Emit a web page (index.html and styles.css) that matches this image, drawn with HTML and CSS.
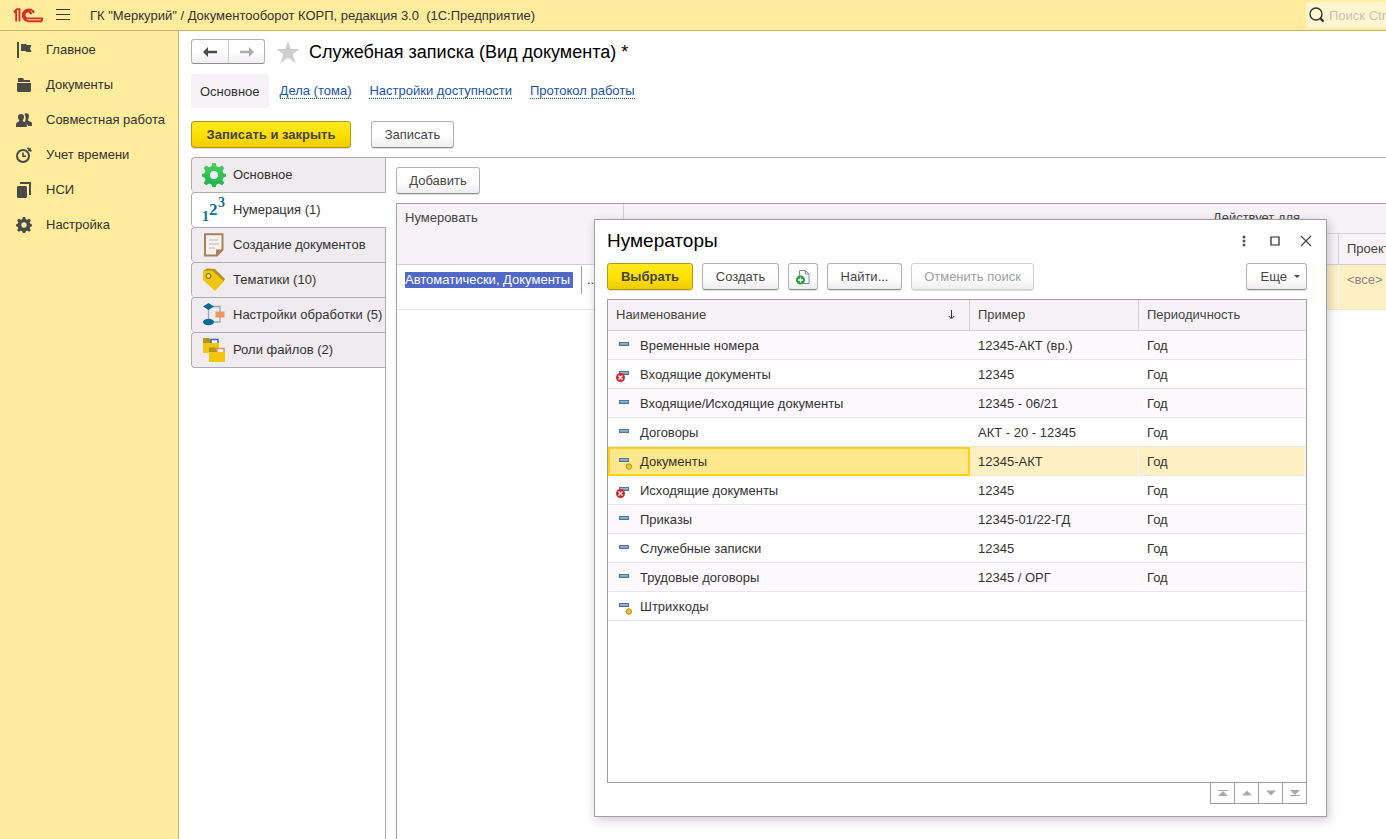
FILE: index.html
```html
<!DOCTYPE html>
<html lang="ru">
<head>
<meta charset="utf-8">
<title>Служебная записка (Вид документа)</title>
<link rel="stylesheet" href="styles.css">
</head>
<body>
<svg class="defs" aria-hidden="true">
  <defs>
    <linearGradient id="bar-fill" x1="0" y1="0" x2="0" y2="1"><stop offset="0" stop-color="#9cc7e4"/><stop offset="1" stop-color="#5f96bd"/></linearGradient>
    <linearGradient id="gear-fill" x1="0" y1="0" x2="0" y2="1"><stop offset="0" stop-color="#4bd05f"/><stop offset="1" stop-color="#22b04c"/></linearGradient>
    <symbol id="item" viewBox="0 0 16 16"><rect x="3.500" y="4.500" width="9" height="3" fill="url(#bar-fill)" stroke="#4d7594"/></symbol>
    <symbol id="item-deleted" viewBox="0 0 16 16"><rect x="3.500" y="4.500" width="9" height="3" fill="url(#bar-fill)" stroke="#4d7594"/><circle cx="4.500" cy="10.500" r="4.500" fill="#d3242c"/><path d="M2.500 8.500l4 4M6.500 8.500l-4 4" stroke="#fff" stroke-width="1.300"/></symbol>
    <symbol id="item-preset" viewBox="0 0 16 16"><rect x="3.500" y="4.500" width="9" height="3" fill="url(#bar-fill)" stroke="#4d7594"/><circle cx="12.800" cy="12.500" r="2.700" fill="#f3c32c" stroke="#b38a16"/></symbol>
    <symbol id="gear" viewBox="0 0 24 24"><path fill-rule="evenodd" d="M10.300 0h3.400l.9 3.300 2.300 1 3-1.800 2.400 2.400-1.800 3 1 2.300 2.500.9v2.600l-2.500.8-1 2.400 1.800 3-2.400 2.400-3-1.800-2.300 1-.9 2.500h-3.400l-.9-2.500-2.300-1-3 1.800-2.400-2.400 1.800-3-1-2.400L0 13.700v-2.600l2.500-.9 1-2.300-1.800-3 2.400-2.400 3 1.800 2.300-1zM12 8a4 4 0 1 0 0 8 4 4 0 0 0 0-8z"/></symbol>
  </defs>
</svg>

<header class="topbar">
  <svg class="logo" viewBox="0 0 30 15" fill="none" stroke="#df2b26" stroke-width="1.900"><path d="M1 4.200h2.200v9.300M1 4l3-2.800h2.500v12.300M21 4.800A5.900 5.900 0 1 0 15 13.200h14M18.200 6.200A3.400 3.400 0 1 0 15 10.400h14v2.600"/></svg>
  <button class="menu-btn" aria-label="Меню"><svg width="14" height="12" viewBox="0 0 14 12"><path d="M0 .5h14M0 5.500h14M0 10.500h14" stroke="#3c3c3c"/></svg></button>
  <span class="app-title">ГК "Меркурий" / Документооборот КОРП, редакция 3.0&nbsp; (1С:Предприятие)</span>
  <label class="search">
    <svg width="16" height="16" viewBox="0 0 16 16" fill="none" stroke="#333"><circle cx="7" cy="7" r="6" stroke-width="1.400"/><path d="M11 11l3.500 3.500" stroke-width="2.400"/></svg>
    <input type="text" placeholder="Поиск Ctrl+Shift+F" aria-label="Поиск">
  </label>
</header>

<div class="shell">
  <nav class="sidebar">
    <a href="#"><svg viewBox="0 0 16 16" fill="#4a4a48"><path d="M1 0h2v16H1zM5 2h5l1 1h4.500L14 6.500l1.500 3.500h-5l-1-1H5z"/></svg>Главное</a>
    <a href="#"><svg viewBox="0 0 16 16" fill="#4a4a48"><path d="M2 1h5l1 2h6v2H2zM1 6h14v8l-1 1H2l-1-1z"/></svg>Документы</a>
    <a href="#"><svg viewBox="0 0 16 16" fill="#4a4a48"><path d="M8.500 2.200C9 1 13 .6 13 4c0 2-.8 3-1.200 4 .2 1.200 4.200 1.400 4.200 3.600V14h-4c-.2-2.200-3-2.800-3.500-3.600 1-1.600 2-5.200 0-8.200z"/><path d="M5 2c2 0 3 1.200 3 3 0 1.600-.8 2.800-1.400 3.600.4 1.400 4 1.600 4.200 3.800V15H0v-2.600C.2 10.200 3 10 3.400 8.600 2.800 7.800 2 6.600 2 5c0-1.800 1-3 3-3z"/></svg>Совместная работа</a>
    <a href="#"><svg viewBox="0 0 16 16" fill="none" stroke="#4a4a48"><circle cx="7" cy="9" r="6" stroke-width="2"/><path d="M7 5.500V9.200h3" stroke-width="1.600"/><path d="M11.500.8l4 3.600M14.500 1.500l-2 2.500" stroke-width="1.800"/></svg>Учет времени</a>
    <a href="#"><svg viewBox="0 0 16 16" fill="#4a4a48"><path d="M4 0h11v13h-2V2H4zM2 4h8l1 1v10l-1 1H2l-1-1V5z"/></svg>НСИ</a>
    <a href="#"><svg viewBox="0 0 24 24" fill="#4a4a48"><use href="#gear"/></svg>Настройка</a>
  </nav>

  <main class="main">
    <div class="title-row">
      <div class="history">
        <button aria-label="Назад"><svg width="14" height="10" viewBox="0 0 14 10"><path d="M0 5l5-5v3.800h9v2.400H5V10z" fill="#4b4b4b"/></svg></button>
        <button aria-label="Вперед"><svg width="14" height="10" viewBox="0 0 14 10"><path d="M14 5L9 0v3.800H0v2.400h9V10z" fill="#ababab"/></svg></button>
      </div>
      <svg class="star" viewBox="0 0 24 22"><path d="M12 0l2.800 8H24l-7.300 5 2.800 9-7.500-5.400L4.500 22l2.800-9L0 8h9.200z" fill="#cfcfd1"/></svg>
      <h1>Служебная записка (Вид документа) *</h1>
    </div>

    <nav class="form-nav">
      <span class="current">Основное</span>
      <a href="#">Дела (тома)</a>
      <a href="#">Настройки доступности</a>
      <a href="#">Протокол работы</a>
    </nav>

    <div class="commands">
      <button class="btn primary save-close">Записать и закрыть</button>
      <button class="btn save">Записать</button>
    </div>

    <div class="pages">
      <div class="page-tabs">
        <button><svg viewBox="0 0 24 24" fill="url(#gear-fill)"><use href="#gear"/></svg>Основное</button>
        <button class="active"><svg class="digits" viewBox="0 0 24 24" fill="#0f7296" aria-hidden="true"><text x="0" y="23" font-size="14">1</text><text x="7" y="17" font-size="17">2</text><text x="16" y="9" font-size="14">3</text></svg>Нумерация (1)</button>
        <button><svg viewBox="0 0 24 24"><path d="M3 1.200h17.500v15.300l-5.500 6H3z" fill="#f5f2ef" stroke="#ab7f58" stroke-width="2"/><path d="M14 23.500v-7h7.500z" fill="#ab7f58"/><path d="M7 7h9M7 11h10M7 15h6" stroke="#b9b9b9" stroke-width="1.200"/></svg>Создание документов</button>
        <button><svg viewBox="0 0 24 24"><path d="M1 3l4-2.500 8 .5 10 10-2 3z" fill="#b3921f"/><path d="M1 3l9-.5L22 13.500 13 23 1 12z" fill="#f2c511"/><circle cx="6.500" cy="8" r="2.300" fill="#efe3a0" stroke="#8f7515" stroke-width="1.200"/></svg>Тематики (10)</button>
        <button><svg viewBox="0 0 24 24"><path d="M6.500 4v16M7 3.500h11V19H7" fill="none" stroke="#8fa9b5" stroke-width="1.300"/><path d="M1 3.500L6.500 0 12 3.500 6.500 7z" fill="#0a6c92"/><ellipse cx="6.500" cy="19" rx="5.500" ry="3.300" fill="#0a6c92"/><path d="M13.500 8.500h9v6h-9z" fill="#ef9761"/></svg>Настройки обработки (5)</button>
        <button><svg viewBox="0 0 24 24"><path d="M1 0h6l2 2v4H1z" fill="#b3921f"/><path d="M9 1.500h7V6H9z" fill="#fff" stroke="#2d64c8" stroke-width="1.400"/><path d="M1 5h16v10H1z" fill="#f2c511"/><path d="M7 9.500h6l2 2V15H7z" fill="#b3921f"/><path d="M15 10.500h7V15h-7z" fill="#fff" stroke="#ef8a4a" stroke-width="1.400"/><path d="M7 14h16v10H7z" fill="#f2c511"/></svg>Роли файлов (2)</button>
      </div>

      <section class="page">
        <button class="btn add">Добавить</button>
        <table class="rules">
          <colgroup><col class="c-num"><col class="c-mid"><col class="c-proj"></colgroup>
          <thead>
            <tr><th rowspan="2">Нумеровать</th><th colspan="2" class="group">Действует для</th></tr>
            <tr><th></th><th>Проект</th></tr>
          </thead>
          <tbody>
            <tr>
              <td class="edit"><div class="editor"><input type="text" value="Автоматически, Документы" aria-label="Нумеровать"><button aria-label="Выбрать значение">...</button></div></td>
              <td class="sel"></td>
              <td class="sel">&lt;все&gt;</td>
            </tr>
          </tbody>
        </table>
      </section>
    </div>
  </main>
</div>

<div class="dialog" role="dialog" aria-labelledby="dlg-title">
  <div class="dlg-head">
    <h2 id="dlg-title">Нумераторы</h2>
    <button aria-label="Еще"><svg width="12" height="12" viewBox="0 0 12 12" fill="#555"><circle cx="6" cy="2" r="1.500"/><circle cx="6" cy="6" r="1.500"/><circle cx="6" cy="10" r="1.500"/></svg></button>
    <button aria-label="Развернуть"><svg width="12" height="12" viewBox="0 0 12 12"><path d="M2 2h8v8H2z" fill="none" stroke="#222" stroke-width="1.200"/></svg></button>
    <button aria-label="Закрыть"><svg width="12" height="12" viewBox="0 0 12 12"><path d="M1 1l10 10M11 1L1 11" stroke="#444" stroke-width="1.200"/></svg></button>
  </div>
  <div class="dlg-tools">
    <button class="btn primary pick">Выбрать</button>
    <button class="btn create">Создать</button>
    <button class="btn copy" aria-label="Создать копированием"><svg width="16" height="16" viewBox="0 0 16 16"><path d="M4.500 12V1.500h6l3.500 3.500v9.500H7" fill="#fff" stroke="#7b8ea6"/><path d="M10.500 1.500V5H14" fill="none" stroke="#7b8ea6"/><circle cx="5.500" cy="11" r="4.500" fill="#2aa13a"/><path d="M5.500 8.500v5M3 11h5" stroke="#fff" stroke-width="1.400"/></svg></button>
    <button class="btn find">Найти...</button>
    <button class="btn cancel" disabled>Отменить поиск</button>
    <button class="btn more">Еще <svg width="6" height="3" viewBox="0 0 6 3"><path d="M0 0h6L3 3z" fill="#444"/></svg></button>
  </div>
  <div class="list">
    <table>
      <colgroup><col class="c-name"><col class="c-sample"><col class="c-period"></colgroup>
      <thead><tr><th><span class="sorted">Наименование<svg width="7" height="10" viewBox="0 0 7 10"><path d="M3.500 0v8M.8 6l2.700 3 2.700-3" fill="none" stroke="#333"/></svg></span></th><th>Пример</th><th>Периодичность</th></tr></thead>
      <tbody>
        <tr><td><svg><use href="#item"/></svg>Временные номера</td><td>12345-АКТ (вр.)</td><td>Год</td></tr>
        <tr><td><svg><use href="#item-deleted"/></svg>Входящие документы</td><td>12345</td><td>Год</td></tr>
        <tr><td><svg><use href="#item"/></svg>Входящие/Исходящие документы</td><td>12345 - 06/21</td><td>Год</td></tr>
        <tr><td><svg><use href="#item"/></svg>Договоры</td><td>АКТ - 20 - 12345</td><td>Год</td></tr>
        <tr class="selected"><td><svg><use href="#item-preset"/></svg>Документы</td><td>12345-АКТ</td><td>Год</td></tr>
        <tr><td><svg><use href="#item-deleted"/></svg>Исходящие документы</td><td>12345</td><td>Год</td></tr>
        <tr><td><svg><use href="#item"/></svg>Приказы</td><td>12345-01/22-ГД</td><td>Год</td></tr>
        <tr><td><svg><use href="#item"/></svg>Служебные записки</td><td>12345</td><td>Год</td></tr>
        <tr><td><svg><use href="#item"/></svg>Трудовые договоры</td><td>12345 / ОРГ</td><td>Год</td></tr>
        <tr><td><svg><use href="#item-preset"/></svg>Штрихкоды</td><td></td><td></td></tr>
      </tbody>
    </table>
  </div>
  <div class="pager">
    <button aria-label="В начало"><svg viewBox="0 0 10 6"><path d="M0 0h10v1H0zM5 1l5 5H0z"/></svg></button>
    <button aria-label="Вверх"><svg viewBox="0 0 10 6"><path d="M5 0.500l5 5H0z"/></svg></button>
    <button aria-label="Вниз"><svg viewBox="0 0 10 6"><path d="M5 5.500l5-5H0z"/></svg></button>
    <button aria-label="В конец"><svg viewBox="0 0 10 6"><path d="M0 5h10v1H0zM5 5l5-5H0z"/></svg></button>
  </div>
</div>
</body>
</html>
```
FILE: styles.css
```css
* { box-sizing: border-box; }
html, body { height: 100%; }
body {
  margin: 0;
  display: flex;
  flex-direction: column;
  overflow: hidden;
  position: relative;
  background: #fff;
  color: #333;
  font: 13px/16px "Liberation Sans", Arial, sans-serif;
}
button, input { font: inherit; color: inherit; margin: 0; }
button { border: 0; padding: 0; background: none; }
h1, h2 { margin: 0; font-size: 18px; line-height: 24px; font-weight: 400; color: #000; }
h2 { font-size: 19px; }
.defs { position: absolute; width: 0; height: 0; }

.topbar {
  flex: none;
  height: 31px;
  display: flex;
  align-items: center;
  background: #ffec9c;
  border-bottom: 1px solid #cdb765;
  padding-left: 13px;
}
.logo { width: 30px; height: 15px; }
.menu-btn { display: flex; margin: 0 20px 0 13px; }
.app-title { white-space: nowrap; padding-top: 1px; }
.search {
  display: flex;
  align-items: center;
  gap: 4px;
  flex: none;
  width: 80px;
  height: 26px;
  margin-left: auto;
  padding-left: 3px;
  overflow: hidden;
  border-radius: 3px 0 0 3px;
  background: #fff6d0;
}
.search svg { flex: none; }
.search input { flex: none; width: 130px; padding: 1px 0 0; border: 0; background: none; outline: 0; }
.search input::placeholder { color: #c6c2b4; opacity: 1; }

.shell { flex: 1; display: flex; min-height: 0; }
.sidebar { flex: none; width: 179px; padding-top: 1px; background: #ffec9c; border-right: 1px solid #cdb765; }
.sidebar a {
  display: flex;
  align-items: center;
  gap: 14px;
  height: 35px;
  padding-left: 16px;
  color: #333;
  text-decoration: none;
}
.sidebar svg { width: 16px; height: 16px; }

.main { flex: 1; min-width: 0; display: flex; flex-direction: column; padding: 8px 0 0 12px; overflow: hidden; }
.title-row { display: flex; align-items: center; height: 25px; }
.history { display: flex; border: 1px solid #b3b3b3; border-bottom-color: #8e8e8e; border-radius: 3px; background: linear-gradient(#fff 50%, #f0eef0); }
.history button { display: flex; align-items: center; justify-content: center; width: 36px; height: 23px; }
.history button + button { border-left: 1px solid #cfcfcf; }
.star { width: 24px; height: 22px; margin: 0 9px 0 11px; }

.form-nav { display: flex; align-items: center; gap: 18px; margin-top: 10px; }
.form-nav .current { height: 34px; padding: 10px 9px 8px; border-radius: 4px; background: #f6f2f6; margin-right: -7px; }
.form-nav a { color: #1a54a6; text-decoration: none; line-height: 14px; padding-top: 1px; border-bottom: 1px dotted #1a54a6; }

.commands { display: flex; gap: 20px; margin: 13px 0 9px; }
.btn {
  flex: none;
  height: 27px;
  border: 1px solid #b3b3b3;
  border-bottom-color: #8f8f8f;
  border-radius: 3px;
  background: linear-gradient(#fff 55%, #efedef);
  color: #444;
  box-shadow: 0 1px 0 #dedede;
}
.btn.primary { font-weight: 700; border-color: #b39a12; background: linear-gradient(#ffe91f, #ffdf00 55%, #efcc00); color: #444; }
.btn:disabled { color: #a0a0a0; border-color: #d0d0d0; }
.save-close { width: 160px; }
.save { width: 83px; }

.pages { flex: 1; display: flex; min-height: 0; }
.page-tabs { flex: none; width: 195px; display: flex; flex-direction: column; border-right: 1px solid #adadad; }
.page-tabs button {
  display: flex;
  align-items: center;
  gap: 7px;
  height: 35px;
  padding-left: 10px;
  border: 1px solid #adadad;
  border-width: 1px 0 0 1px;
  border-radius: 4px 0 0 4px;
  background: #efebef;
  text-align: left;
  white-space: nowrap;
}
.page-tabs button:last-child { height: 36px; border-bottom-width: 1px; }
.page-tabs .active { background: #fff; margin-right: -1px; }
.page-tabs svg { width: 24px; height: 24px; overflow: visible; }
.digits { font-family: "Liberation Serif", serif; font-weight: 700; }

.page { flex: 1; min-width: 0; display: flex; flex-direction: column; align-items: flex-start; border-top: 1px solid #adadad; padding: 9px 0 0 10px; overflow: hidden; }
.add { width: 84px; }
.rules {
  flex: 1;
  display: block;
  width: 1494px;
  margin-top: 9px;
  border-collapse: separate;
  border-spacing: 0;
  table-layout: fixed;
  border: 1px solid #a0a0a0;
  border-width: 1px 0 0 1px;
}
.c-num { width: 227px; }
.c-mid { width: 715px; }
.c-proj { width: 551px; }
.rules th {
  height: 30px;
  padding: 6px 8px 0;
  text-align: left;
  vertical-align: top;
  font-weight: 400;
  color: #444;
  background: #f6f2f6;
  border: 1px solid #cfcfcf;
  border-width: 0 1px 1px 0;
}
.rules .group { text-align: center; }
.rules td { height: 45px; padding: 7px 8px; vertical-align: top; border-bottom: 1px solid #e6e6e6; }
.rules tr + tr th { height: 31px; padding-top: 7px; }
.rules .edit { padding: 0 0 0 8px; }
.rules .sel { background: #fff0c4; border-right: 1px solid #fff; color: #888; }
.editor { display: flex; align-items: center; height: 29px; gap: 8px; }
.editor input { width: 168px; height: 16px; padding: 0; border: 0; outline: 0; background: #5068c8; color: #fff; }
.editor button { height: 28px; padding-left: 5px; border-left: 1px solid #a0a0a0; }

.dialog {
  position: absolute;
  left: 594px;
  top: 219px;
  width: 733px;
  height: 598px;
  display: flex;
  flex-direction: column;
  padding: 8px 19px 12px 12px;
  background: #fff;
  border: 1px solid #a0a0a0;
  box-shadow: 2px 3px 9px rgba(60, 40, 60, .25);
}
.dlg-head { display: flex; align-items: center; gap: 19px; height: 25px; }
.dlg-head h2 { flex: 1; }
.dlg-head button { display: flex; }
.dlg-head button:last-child { margin-right: -5px; }
.dlg-tools { display: flex; gap: 9px; margin: 10px 0 9px; }
.pick { width: 86px; }
.create { width: 77px; }
.copy { width: 30px; display: flex; align-items: center; justify-content: center; }
.find { width: 75px; }
.cancel { width: 123px; }
.more { width: 61px; margin-left: auto; display: flex; align-items: center; justify-content: flex-end; gap: 7px; padding-right: 6px; }
.list { flex: 1; min-height: 0; border: 1px solid #a0a0a0; }
.list table { width: 100%; table-layout: fixed; border-collapse: separate; border-spacing: 0; }
.c-name { width: 362px; }
.c-sample { width: 169px; }
.list th { height: 31px; padding: 0 8px; text-align: left; font-weight: 400; color: #444; background: #f6f2f6; border: 1px solid #cfcfcf; border-width: 0 1px 1px 0; }
.list th:last-child { border-right: 0; }
.sorted { display: flex; align-items: center; justify-content: space-between; padding-right: 6px; }
.list td { height: 29px; padding: 2px 8px 0; border-bottom: 1px solid #e6e6e6; color: #333; }
.list tbody tr:nth-child(odd) td { background: #fdf9fd; }
.list td svg { width: 16px; height: 16px; margin-right: 8px; vertical-align: middle; }
.list tbody tr.selected td { background: #fff0c4; border-right: 1px solid #fff; }
.list tbody tr.selected td:first-child { background: #ffe78c; border: 2px solid #ffcf1a; padding: 1px 6px 0; }
.pager { display: flex; justify-content: flex-end; }
.pager button { display: flex; align-items: center; justify-content: center; width: 25px; height: 21px; margin-left: -1px; border: 1px solid #a0a0a0; border-top: 0; }
.pager svg { width: 10px; height: 6px; fill: #aaa; }
```
